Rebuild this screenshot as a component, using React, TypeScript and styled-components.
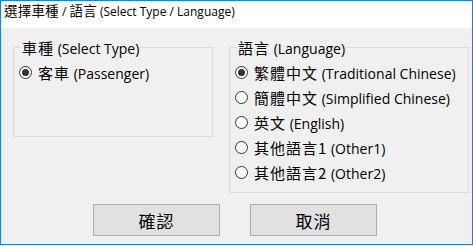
import React from "react";
import styled, { createGlobalStyle } from "styled-components";

const GlobalStyle = createGlobalStyle`
  html, body {
    margin: 0;
    padding: 0;
    background: #ffffff;
  }
  body {
    font-family: "Open Sans", "Noto Sans CJK TC", sans-serif;
    color: #000;
  }
`;

const Window = styled.div`
  width: 473px;
  height: 245px;
  box-sizing: border-box;
  border: 1px solid #1883d7;
  display: flex;
  flex-direction: column;
  overflow: hidden;
`;

const TitleBar = styled.div`
  height: 27px;
  flex: none;
  box-sizing: border-box;
  background: #ffffff;
  padding: 0 0 0 3px;
  font-size: 12px;
  line-height: 19px;
  white-space: nowrap;
`;

const Body = styled.div`
  flex: 1;
  background: #f0f0f0;
  padding: 19px 3px 0 12px;
  display: flex;
  flex-direction: column;
`;

const GroupRow = styled.div`
  display: flex;
  align-items: flex-start;
  gap: 16px;
`;

const Group = styled.div<{ $w: number; $h: number }>`
  position: relative;
  width: ${(p) => p.$w}px;
  height: ${(p) => p.$h}px;
  box-sizing: border-box;
  border: 1px solid #dcdcdc;
  padding: 12px 0 0 5px;
`;

const Legend = styled.div`
  position: absolute;
  top: -10px;
  left: 7px;
  padding: 0 1px;
  background: #f0f0f0;
  font-size: 14px;
  line-height: 19px;
  white-space: nowrap;
`;

const Han = styled.span<{ $size?: number; $spacing?: number }>`
  font-family: "Noto Sans CJK TC", sans-serif;
  font-size: ${(p) => p.$size ?? 15}px;
  letter-spacing: ${(p) => p.$spacing ?? 1}px;
`;

const Option = styled.label`
  display: flex;
  align-items: center;
  gap: 6px;
  height: 25px;
  font-size: 14px;
  white-space: nowrap;
`;

const Radio = styled.span<{ $on?: boolean }>`
  position: relative;
  flex: none;
  width: 13px;
  height: 13px;
  box-sizing: border-box;
  border: 1px solid #333333;
  border-radius: 50%;
  background: #ffffff;

  &::after {
    content: "";
    display: ${(p) => (p.$on ? "block" : "none")};
    position: absolute;
    left: 2px;
    top: 2px;
    width: 7px;
    height: 7px;
    border-radius: 50%;
    background: #333333;
  }
`;

const ButtonRow = styled.div`
  display: flex;
  gap: 30px;
  margin: 11px 0 0 80px;
`;

const Button = styled.button`
  width: 127px;
  height: 32px;
  box-sizing: border-box;
  border: 1px solid #adadad;
  background: #e1e1e1;
  padding: 0;
  display: flex;
  align-items: center;
  justify-content: center;
  font-family: "Noto Sans CJK TC", sans-serif;
  font-size: 17px;
  font-weight: 400;
  letter-spacing: 1px;
  color: #000;
`;

const languages = [
  { han: "繁體中文", en: "(Traditional Chinese)", on: true },
  { han: "簡體中文", en: "(Simplified Chinese)" },
  { han: "英文", en: "(English)" },
  { han: "其他語言1", en: "(Other1)" },
  { han: "其他語言2", en: "(Other2)" },
];

export default function App() {
  return (
    <>
      <GlobalStyle />
      <Window>
        <TitleBar>
          <Han $size={13.5} $spacing={0.2}>選擇車種</Han> / <Han $size={13.5} $spacing={0.2}>語言</Han> (Select Type / Language)
        </TitleBar>
        <Body>
          <GroupRow>
            <Group $w={200} $h={90}>
              <Legend>
                <Han>車種</Han> (Select Type)
              </Legend>
              <Option>
                <Radio $on />
                <span>
                  <Han>客車</Han> (Passenger)
                </span>
              </Option>
            </Group>
            <Group $w={240} $h={146}>
              <Legend>
                <Han>語言</Han> (Language)
              </Legend>
              {languages.map((l) => (
                <Option key={l.en}>
                  <Radio $on={l.on} />
                  <span>
                    <Han>{l.han}</Han> {l.en}
                  </span>
                </Option>
              ))}
            </Group>
          </GroupRow>
          <ButtonRow>
            <Button>確認</Button>
            <Button>取消</Button>
          </ButtonRow>
        </Body>
      </Window>
    </>
  );
}
